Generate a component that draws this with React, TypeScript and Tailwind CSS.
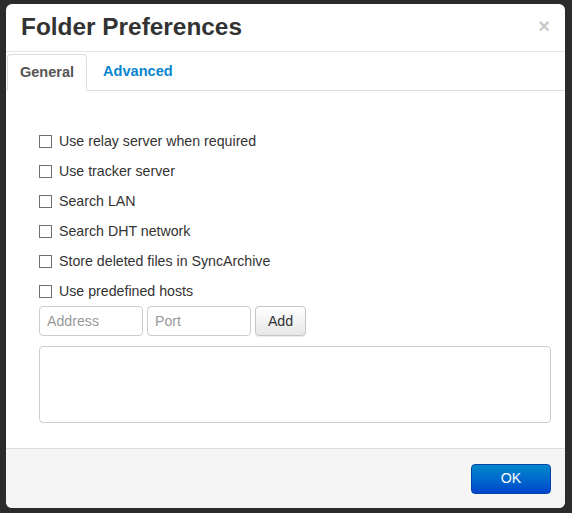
import React from "react";

const Check = ({ label }: { label: string }) => (
  <label className="flex items-center h-[30px]">
    <span className="w-[13px] h-[13px] border border-[#707070] bg-white box-border" />
    <span className="ml-[7px] pt-[2px] text-[14.2px] text-[#333]">{label}</span>
  </label>
);

export default function App() {
  return (
    <div
      className="w-[572px] h-[513px] bg-[#2b2b2b] pt-[4px] pl-[6px]"
      style={{ fontFamily: '"Liberation Sans", Arial, sans-serif' }}
    >
      <div className="w-[559px] h-[504px] bg-white rounded-[6px] flex flex-col overflow-hidden">
        <div className="h-[48px] flex items-center justify-between pl-[15px] pr-[15px] border-b border-[#e5e5e5] box-border">
          <div className="text-[24.4px] font-bold text-[#333] leading-none">Folder Preferences</div>
          <div className="text-[#c8c8c8] text-[20px] font-bold leading-none mt-[-4px]">×</div>
        </div>
        <div className="h-[39px] flex items-end border-b border-[#ddd] box-border">
          <div className="h-[37px] ml-[1px] w-[80px] border border-[#ddd] border-b-white mb-[-1px] rounded-t-[4px] bg-white flex items-center justify-center text-[14.5px] font-bold text-[#555]">
            General
          </div>
          <div className="h-[37px] pl-[16px] flex items-center text-[14.6px] font-bold text-[#0a86cf]">
            Advanced
          </div>
        </div>
        <div className="flex-1 pl-[33px] pr-[14px] pt-[35px]">
          <Check label="Use relay server when required" />
          <Check label="Use tracker server" />
          <Check label="Search LAN" />
          <Check label="Search DHT network" />
          <Check label="Store deleted files in SyncArchive" />
          <Check label="Use predefined hosts" />
          <div className="flex gap-[4px]">
            <div className="w-[104px] h-[30px] border border-[#ccc] rounded-[4px] flex items-center px-[7px] pt-[2px] text-[14.2px] text-[#999]">Address</div>
            <div className="w-[104px] h-[30px] border border-[#ccc] rounded-[4px] flex items-center px-[7px] pt-[2px] text-[14.2px] text-[#999]">Port</div>
            <div className="w-[51px] h-[30px] border border-[#c5c5c5] rounded-[4px] flex items-center justify-center pt-[2px] text-[14.2px] text-[#333] bg-gradient-to-b from-white to-[#e6e6e6] shadow-[0_1px_1px_rgba(0,0,0,0.08)]">Add</div>
          </div>
          <div className="mt-[10px] h-[77px] border border-[#ccc] rounded-[4px]" />
        </div>
        <div className="h-[60px] border-t border-[#ddd] bg-[#f5f5f5] flex items-center justify-end pr-[14px] box-border">
          <div className="w-[80px] h-[30px] rounded-[4px] bg-gradient-to-b from-[#0088cc] to-[#0044cc] border border-[#0044aa] flex items-center justify-center text-white text-[14.2px]">
            OK
          </div>
        </div>
      </div>
    </div>
  );
}
